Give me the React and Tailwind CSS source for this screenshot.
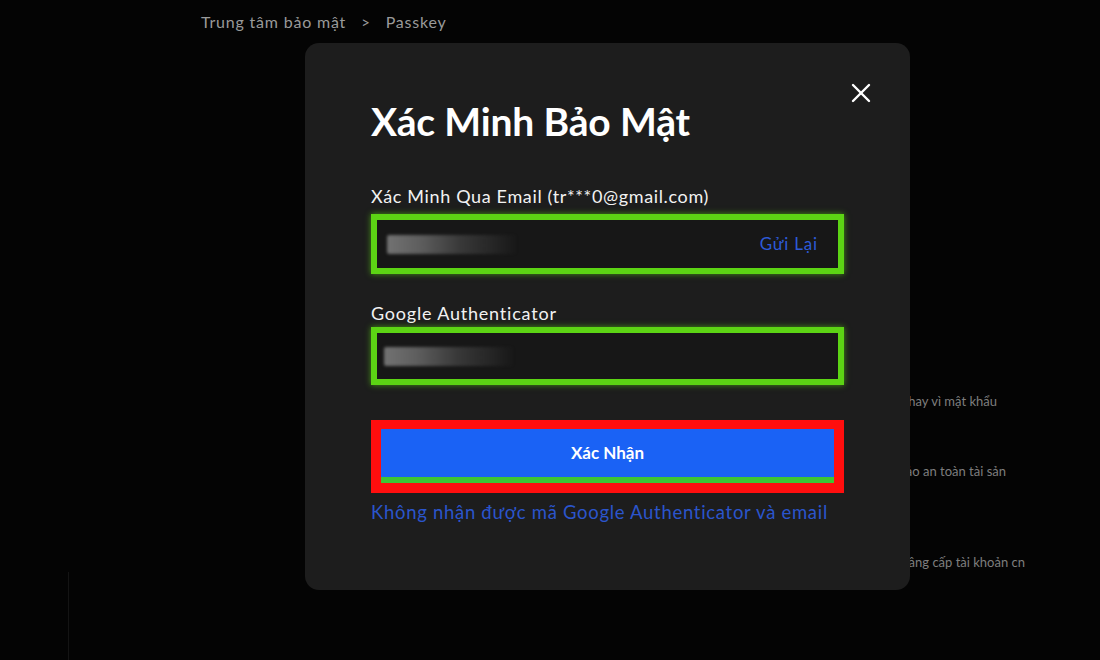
import React from "react";

function CloseIcon() {
  return (
    <svg width="20" height="20" viewBox="0 0 20 20" fill="none" stroke="#ffffff" strokeWidth="2.4" strokeLinecap="round">
      <path d="M2 2 L18 18" />
      <path d="M18 2 L2 18" />
    </svg>
  );
}

function MaskedValue({ className = "" }) {
  return (
    <div
      className={
        "h-[19px] w-[130px] rounded-[2px] blur-[1.5px] bg-[linear-gradient(90deg,#727272_0%,#5e5e5e_25%,#3a3a3a_55%,rgba(40,40,40,0)_100%)] " +
        className
      }
    />
  );
}

function OutlinedField({ children, height }) {
  return (
    <div
      className={
        "flex items-center border-[6px] border-[#5cd414] bg-[#171717] shadow-[0_0_6px_rgba(92,212,20,0.65)] " +
        height
      }
    >
      {children}
    </div>
  );
}

export default function App() {
  return (
    <div
      className="relative h-[660px] w-[1100px] overflow-hidden bg-[#040404] text-white"
      style={{ fontFamily: "Lato, 'Noto Sans', sans-serif" }}
    >
      {/* page behind the dialog */}
      <div className="flex h-full flex-col">
        <nav className="flex items-center gap-[15px] pl-[201px] pt-[10px] text-[16px] leading-[24px] tracking-[0.8px] text-[#9a9a9a]">
          <span>Trung tâm bảo mật</span>
          <span className="text-[15px]">&gt;</span>
          <span>Passkey</span>
        </nav>

        <div className="ml-[560px] mt-[357px] flex w-[470px] flex-col text-[13px] leading-[20px] text-[#7e7e7e]">
          <p className="pr-[33px] text-right">Đăng nhập nhanh và an toàn hơn với passkey thay vì mật khẩu</p>
          <p className="mt-[50px] pr-[24px] text-right">Bảo vệ tài khoản của bạn, đảm bảo an toàn tài sản</p>
          <p className="mt-[71px] pr-[5px] text-right">Quản lý thiết bị đăng nhập và nâng cấp tài khoản cn</p>
        </div>

        <div className="mt-auto h-[100px] w-[69px] border-r border-[#141414]" />
      </div>

      {/* verification dialog */}
      <div className="absolute left-[305px] top-[43px] flex h-[547px] w-[605px] flex-col rounded-[14px] bg-[#1d1d1d] px-[66px] pt-[58px]">
        <button className="absolute right-[39px] top-[40px] flex h-[20px] w-[20px] items-center justify-center">
          <CloseIcon />
        </button>

        <h1 className="text-[39px] font-bold leading-[40px] tracking-[-0.15px] text-white">Xác Minh Bảo Mật</h1>

        <label className="mt-[43px] text-[18px] leading-[24px] tracking-[0.65px] text-[#f2f2f2]">
          Xác Minh Qua Email (tr***0@gmail.com)
        </label>
        <div className="mt-[6px]">
          <OutlinedField height="h-[60px]">
            <div className="flex w-full items-center justify-between pl-[10px] pr-[20px]">
              <MaskedValue />
              <span className="text-[17px] tracking-[0.8px] text-[#2d5ad6]">Gửi Lại</span>
            </div>
          </OutlinedField>
        </div>

        <label className="mt-[27px] text-[18px] leading-[24px] tracking-[0.8px] text-[#f2f2f2]">Google Authenticator</label>
        <div className="mt-[2px]">
          <OutlinedField height="h-[58px]">
            <div className="pl-[7px]">
              <MaskedValue />
            </div>
          </OutlinedField>
        </div>

        <div className="mt-[35px] border-x-[10px] border-b-[10px] border-t-[9px] border-[#ff0e0e]">
          <button className="flex h-[48px] w-full items-center justify-center bg-[#1a62f5] text-[17px] font-bold text-white">
            Xác Nhận
          </button>
          <div className="h-[6px] bg-[#3ec535]" />
        </div>

        <a className="mt-[7px] text-[18.5px] leading-[24px] tracking-[0.7px] text-[#2b55cc]">
          Không nhận được mã Google Authenticator và email
        </a>
      </div>
    </div>
  );
}
